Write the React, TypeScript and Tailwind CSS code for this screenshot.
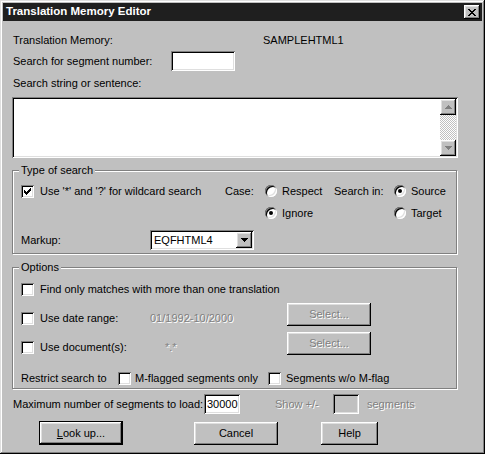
import React from "react";

const sunken =
  "shadow-[inset_1px_1px_#808080,inset_-1px_-1px_#fff,inset_2px_2px_#000,inset_-2px_-2px_#dfdfdf]";
const raised =
  "shadow-[inset_-1px_-1px_#000,inset_1px_1px_#fff,inset_-2px_-2px_#808080,inset_2px_2px_#dfdfdf]";
const disabled = "text-[#808080] [text-shadow:1px_1px_#fff]";

function Checkbox({ checked = false }: { checked?: boolean }) {
  return (
    <span className={`relative flex h-[13px] w-[13px] shrink-0 items-center justify-center bg-white ${sunken}`}>
      {checked && (
        <svg width="7" height="7" viewBox="0 0 7 7" shapeRendering="crispEdges">
          <path
            d="M6 0h1v3h-1v1h-1v1h-1v1h-1v1h-1v-1h-1v-1h-1v-3h1v1h1v1h1v-1h1v-1h1z"
            fill="#000"
          />
        </svg>
      )}
    </span>
  );
}

function Radio({ checked = false }: { checked?: boolean }) {
  return (
    <span className={`flex h-[12px] w-[12px] shrink-0 items-center justify-center rounded-full bg-white ${sunken}`}>
      {checked && <span className="h-[4px] w-[4px] rounded-full bg-black" />}
    </span>
  );
}

function Group({
  legend,
  className,
  children,
}: {
  legend: string;
  className?: string;
  children: React.ReactNode;
}) {
  return (
    <div
      className={`relative w-[445px] border border-[#808080] shadow-[inset_1px_1px_#fff,1px_1px_#fff] ${className ?? ""}`}
    >
      <span className="absolute -top-[8px] left-[6px] bg-[#c0c0c0] px-[2px] leading-[14px]">{legend}</span>
      {children}
    </div>
  );
}

function Arrow({ dir, color }: { dir: "up" | "down"; color: string }) {
  return (
    <svg width="7" height="4" viewBox="0 0 7 4" shapeRendering="crispEdges">
      {dir === "up" ? (
        <path d="M3 0h1v1h1v1h1v1h1v1h-7v-1h1v-1h1v-1h1z" fill={color} />
      ) : (
        <path d="M0 0h7v1h-1v1h-1v1h-1v1h-1v-1h-1v-1h-1v-1h-1z" fill={color} />
      )}
    </svg>
  );
}

export default function App() {
  return (
    <div className="h-[454px] w-[485px] bg-[#c0c0c0] [font-family:'Liberation_Sans',Arial,sans-serif] text-[11px] text-black">
      <div
        className={`flex h-[454px] w-[485px] flex-col p-[3px] shadow-[inset_-1px_-1px_#000,inset_1px_1px_#dfdfdf,inset_-2px_-2px_#808080,inset_2px_2px_#fff]`}
      >
        {/* Title bar */}
        <div className="flex h-[18px] items-center justify-between bg-[#1f1f1f] pl-[3px] pr-[2px]">
          <span className="text-[11.5px] font-bold text-white">Translation Memory Editor</span>
          <span className={`flex h-[14px] w-[16px] items-center justify-center bg-[#c0c0c0] ${raised}`}>
            <svg width="8" height="7" viewBox="0 0 8 7" shapeRendering="crispEdges">
              <path
                d="M0 0h2v1h1v1h2v-1h1v-1h2v1h-1v1h-1v1h-1v1h1v1h1v1h1v1h-2v-1h-1v-1h-2v1h-1v1h-2v-1h1v-1h1v-1h1v-1h-1v-1h-1v-1h-1z"
                fill="#000"
              />
            </svg>
          </span>
        </div>

        {/* Content */}
        <div className="flex flex-col pl-[9px]">
          <div className="mt-[10px] flex h-[18px] items-center pl-[1px]">
            <span className="w-[250px]">Translation Memory:</span>
            <span>SAMPLEHTML1</span>
          </div>
          <div className="mt-[2px] flex h-[20px] items-center pl-[1px]">
            <span className="w-[158px]">Search for segment number:</span>
            <span className={`h-[20px] w-[64px] bg-white ${sunken}`} />
          </div>
          <div className="mt-[5px] flex h-[15px] items-center pl-[1px]">Search string or sentence:</div>

          {/* Text area */}
          <div className={`mt-[6px] flex h-[61px] w-[446px] justify-end bg-white p-[2px] ${sunken}`}>
            <div className="flex w-[16px] flex-col">
              <div className={`flex h-[16px] items-center justify-center bg-[#c0c0c0] ${raised}`}>
                <Arrow dir="up" color="#808080" />
              </div>
              <div className="flex-1 bg-[repeating-conic-gradient(#c0c0c0_0_25%,#fff_0_50%)] bg-[length:2px_2px]" />
              <div className={`flex h-[16px] items-center justify-center bg-[#c0c0c0] ${raised}`}>
                <Arrow dir="down" color="#808080" />
              </div>
            </div>
          </div>

          {/* Type of search */}
          <Group legend="Type of search" className="mt-[12px] pb-[3px] pl-[8px] pt-[11px]">
            <div className="flex h-[18px] items-center">
              <div className="flex w-[204px] items-center">
                <Checkbox checked />
                <span className="ml-[6px]">Use '*' and '?' for wildcard search</span>
              </div>
              <span className="w-[40px]">Case:</span>
              <div className="flex w-[69px] items-center">
                <Radio />
                <span className="ml-[5px]">Respect</span>
              </div>
              <span className="w-[60px]">Search in:</span>
              <div className="flex items-center">
                <Radio checked />
                <span className="ml-[5px]">Source</span>
              </div>
            </div>
            <div className="mt-[4px] flex h-[18px] items-center">
              <span className="w-[244px]" />
              <div className="flex w-[129px] items-center">
                <Radio checked />
                <span className="ml-[5px]">Ignore</span>
              </div>
              <div className="flex items-center">
                <Radio />
                <span className="ml-[5px]">Target</span>
              </div>
            </div>
            <div className="mt-[8px] flex h-[20px] items-center">
              <span className="w-[129px]">Markup:</span>
              <div className={`flex h-[20px] w-[104px] items-center justify-between bg-white p-[2px] ${sunken}`}>
                <span className="pl-[2px]">EQFHTML4</span>
                <span className={`flex h-[16px] w-[16px] items-center justify-center bg-[#c0c0c0] ${raised}`}>
                  <Arrow dir="down" color="#000" />
                </span>
              </div>
            </div>
          </Group>

          {/* Options */}
          <Group legend="Options" className="mt-[13px] pb-[2px] pl-[8px] pt-[12px]">
            <div className="flex h-[18px] items-center">
              <Checkbox />
              <span className="ml-[6px]">Find only matches with more than one translation</span>
            </div>
            <div className="mt-[5px] flex h-[23px] items-start">
              <div className="mt-[8px] flex h-[14px] w-[129px] items-center">
                <Checkbox />
                <span className="ml-[6px]">Use date range:</span>
              </div>
              <span className={`mt-[8px] h-[14px] w-[137px] leading-[14px] ${disabled}`}>01/1992-10/2000</span>
              <span className={`flex h-[23px] w-[84px] items-center justify-center bg-[#c0c0c0] ${raised} ${disabled}`}>
                Select...
              </span>
            </div>
            <div className="mt-[6px] flex h-[23px] items-start">
              <div className="mt-[8px] flex h-[14px] w-[144px] items-center">
                <Checkbox />
                <span className="ml-[6px]">Use document(s):</span>
              </div>
              <span className={`mt-[8px] h-[14px] w-[122px] leading-[14px] ${disabled}`}>*.*</span>
              <span className={`flex h-[23px] w-[84px] items-center justify-center bg-[#c0c0c0] ${raised} ${disabled}`}>
                Select...
              </span>
            </div>
            <div className="mt-[15px] flex h-[16px] items-center">
              <span className="w-[97px]">Restrict search to</span>
              <Checkbox />
              <span className="ml-[4px] w-[133px]">M-flagged segments only</span>
              <Checkbox />
              <span className="ml-[5px]">Segments w/o M-flag</span>
            </div>
          </Group>

          {/* Max segments */}
          <div className="mt-[5px] flex h-[20px] items-center pl-[1px]">
            <span className="w-[191px]">Maximum number of segments to load:</span>
            <span className={`flex h-[20px] w-[36px] items-center bg-white pl-[3px] ${sunken}`}>30000</span>
            <span className={`ml-[35px] w-[58px] ${disabled}`}>Show +/-</span>
            <span className={`h-[20px] w-[26px] bg-[#c0c0c0] ${sunken}`} />
            <span className={`ml-[8px] ${disabled}`}>segments</span>
          </div>

          {/* Buttons */}
          <div className="mt-[7px] flex h-[24px] items-center">
            <span className="ml-[27px] flex h-[24px] w-[84px] border border-black">
              <span className={`flex flex-1 items-center justify-center bg-[#c0c0c0] ${raised}`}>
                <span>
                  <span className="underline">L</span>ook up...
                </span>
              </span>
            </span>
            <span className={`ml-[71px] flex h-[23px] w-[84px] items-center justify-center bg-[#c0c0c0] ${raised}`}>
              Cancel
            </span>
            <span className={`ml-[43px] flex h-[23px] w-[57px] items-center justify-center bg-[#c0c0c0] ${raised}`}>
              Help
            </span>
          </div>
        </div>
      </div>
    </div>
  );
}
